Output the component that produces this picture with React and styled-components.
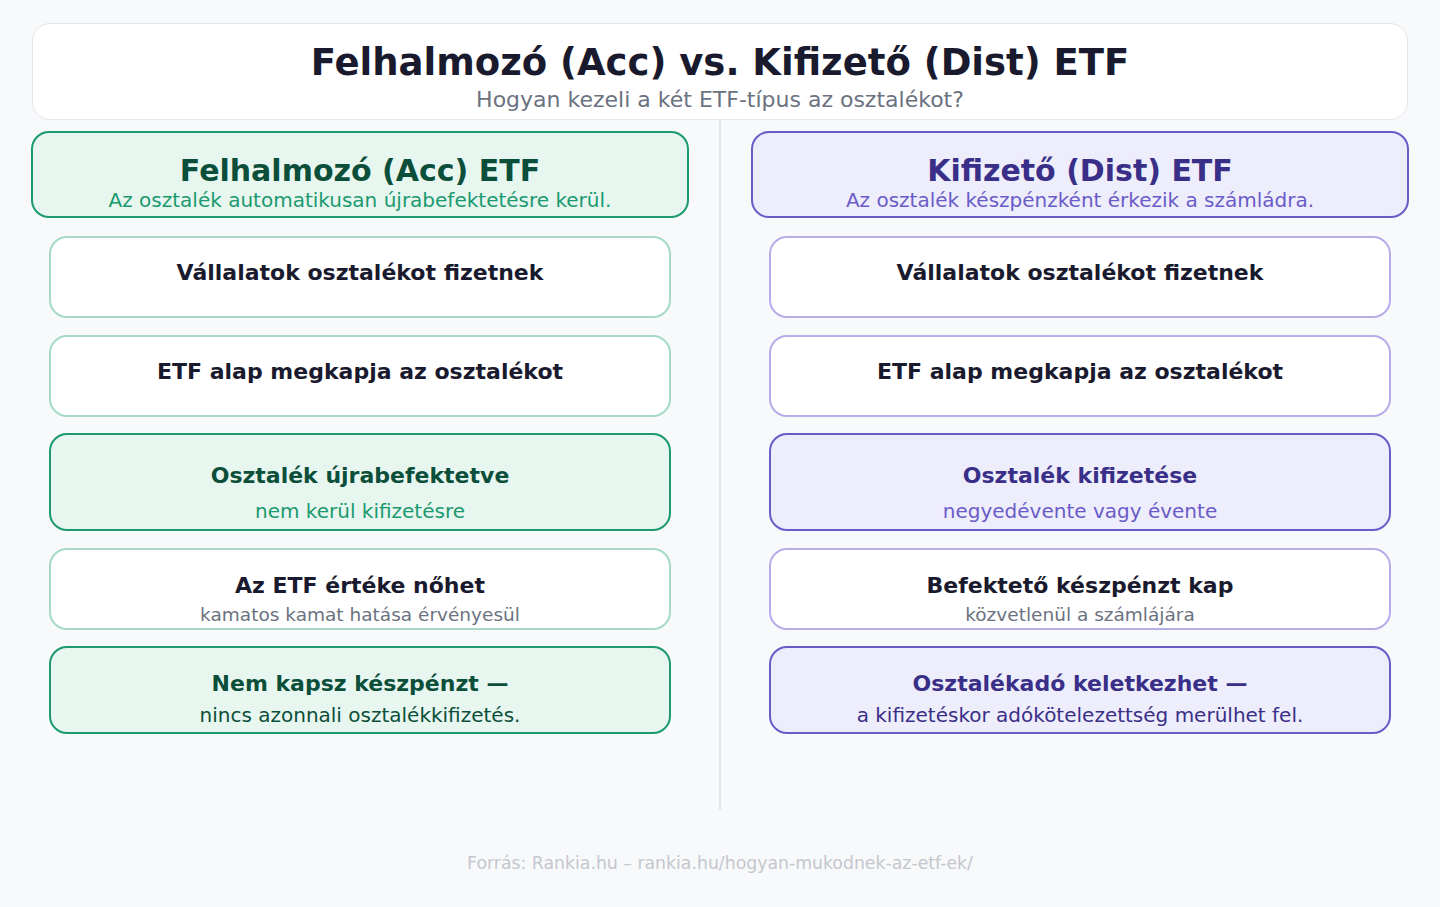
import React from 'react';
import styled, { createGlobalStyle, css } from 'styled-components';

const GlobalStyle = createGlobalStyle`
  html, body {
    margin: 0;
    padding: 0;
    background: #f8f9fb;
  }
  body {
    font-family: 'DejaVu Sans', 'Liberation Sans', sans-serif;
  }
`;

const palette = {
  acc: {
    strong: '#1a9a6e',
    soft: '#a6dac6',
    bg: '#e8f6f0',
    ink: '#0b4f3a',
    accent: '#1a9a6e'
  },
  dist: {
    strong: '#6a5cc8',
    soft: '#b6aee8',
    bg: '#eeedfb',
    ink: '#3a2f88',
    accent: '#6a5cc8'
  }
};

const Page = styled.div`
  width: 1440px;
  height: 907px;
  box-sizing: border-box;
  padding: 23px 31px 0 31px;
  display: flex;
  flex-direction: column;
  overflow: hidden;
`;

const Header = styled.header`
  margin: 0 1px;
  height: 97px;
  flex-shrink: 0;
  box-sizing: border-box;
  background: #ffffff;
  border: 1px solid #e4e6ea;
  border-radius: 18px;
  display: flex;
  flex-direction: column;
  align-items: center;
  padding-top: 17px;
`;

const Title = styled.h1`
  margin: 0;
  font-size: 37px;
  line-height: 44px;
  font-weight: bold;
  color: #1a1a2e;
`;

const Subtitle = styled.p`
  margin: 2px 0 0;
  font-size: 22px;
  line-height: 26px;
  color: #6b7280;
`;

const Columns = styled.div`
  display: grid;
  grid-template-columns: 658px 1fr 658px;
  height: 690px;
  flex-shrink: 0;
`;

const Divider = styled.div`
  justify-self: center;
  width: 2px;
  background: #e2e4e8;
`;

const Column = styled.section`
  display: flex;
  flex-direction: column;
  padding-top: 11px;
`;

const ColumnHead = styled.div`
  height: 87px;
  box-sizing: border-box;
  border: 2.5px solid ${p => palette[p.$tone].strong};
  background: ${p => palette[p.$tone].bg};
  border-radius: 18px;
  display: flex;
  flex-direction: column;
  align-items: center;
  padding-top: 20px;
`;

const ColumnTitle = styled.h2`
  margin: 0;
  font-size: 30px;
  line-height: 36px;
  font-weight: bold;
  color: ${p => palette[p.$tone].ink};
`;

const ColumnSub = styled.p`
  margin: -1px 0 0;
  font-size: 20px;
  line-height: 24px;
  color: ${p => palette[p.$tone].accent};
`;

const Steps = styled.div`
  display: flex;
  flex-direction: column;
  gap: 16.5px;
  padding: 18px 18px 0 18px;
`;

const stepShapes = {
  plain: css`
    height: 82px;
    padding-top: 22px;
  `,
  highlight: css`
    height: 98px;
    padding-top: 27.5px;
  `,
  detail: css`
    height: 82px;
    padding-top: 23px;
  `,
  note: css`
    height: 88px;
    padding-top: 23px;
  `
};

const subGap = {
  highlight: '10px',
  detail: '5px',
  note: '6px'
};

const isStrong = kind => kind === 'highlight' || kind === 'note';

const Step = styled.div`
  box-sizing: border-box;
  border-radius: 18px;
  display: flex;
  flex-direction: column;
  align-items: center;
  ${p => stepShapes[p.$kind]}
  ${p =>
    isStrong(p.$kind)
      ? css`
          border: 2.5px solid ${palette[p.$tone].strong};
          background: ${palette[p.$tone].bg};
        `
      : css`
          border: 2px solid ${palette[p.$tone].soft};
          background: #ffffff;
        `}
`;

const StepTitle = styled.div`
  font-size: 22px;
  line-height: 26px;
  font-weight: bold;
  color: ${p => (isStrong(p.$kind) ? palette[p.$tone].ink : '#1a1a2e')};
`;

const StepSub = styled.div`
  margin-top: ${p => subGap[p.$kind]};
  font-size: ${p => (p.$kind === 'detail' ? '18.5px' : '20px')};
  line-height: ${p => (p.$kind === 'detail' ? '22px' : '24px')};
  color: ${p =>
    p.$kind === 'highlight'
      ? palette[p.$tone].accent
      : p.$kind === 'note'
      ? palette[p.$tone].ink
      : '#6b7280'};
`;

const Footer = styled.footer`
  text-align: center;
  font-size: 17.3px;
  line-height: 20px;
  color: #c4c7cd;
  padding-top: 43px;
`;

const columns = [
  {
    tone: 'acc',
    title: 'Felhalmozó (Acc) ETF',
    sub: 'Az osztalék automatikusan újrabefektetésre kerül.',
    steps: [
      { kind: 'plain', title: 'Vállalatok osztalékot fizetnek' },
      { kind: 'plain', title: 'ETF alap megkapja az osztalékot' },
      { kind: 'highlight', title: 'Osztalék újrabefektetve', sub: 'nem kerül kifizetésre' },
      { kind: 'detail', title: 'Az ETF értéke nőhet', sub: 'kamatos kamat hatása érvényesül' },
      { kind: 'note', title: 'Nem kapsz készpénzt —', sub: 'nincs azonnali osztalékkifizetés.' }
    ]
  },
  {
    tone: 'dist',
    title: 'Kifizető (Dist) ETF',
    sub: 'Az osztalék készpénzként érkezik a számládra.',
    steps: [
      { kind: 'plain', title: 'Vállalatok osztalékot fizetnek' },
      { kind: 'plain', title: 'ETF alap megkapja az osztalékot' },
      { kind: 'highlight', title: 'Osztalék kifizetése', sub: 'negyedévente vagy évente' },
      { kind: 'detail', title: 'Befektető készpénzt kap', sub: 'közvetlenül a számlájára' },
      {
        kind: 'note',
        title: 'Osztalékadó keletkezhet —',
        sub: 'a kifizetéskor adókötelezettség merülhet fel.'
      }
    ]
  }
];

const EtfColumn = ({ data }) => (
  <Column>
    <ColumnHead $tone={data.tone}>
      <ColumnTitle $tone={data.tone}>{data.title}</ColumnTitle>
      <ColumnSub $tone={data.tone}>{data.sub}</ColumnSub>
    </ColumnHead>
    <Steps>
      {data.steps.map(step => (
        <Step key={step.title} $kind={step.kind} $tone={data.tone}>
          <StepTitle $kind={step.kind} $tone={data.tone}>
            {step.title}
          </StepTitle>
          {step.sub && (
            <StepSub $kind={step.kind} $tone={data.tone}>
              {step.sub}
            </StepSub>
          )}
        </Step>
      ))}
    </Steps>
  </Column>
);

const App = () => (
  <>
    <GlobalStyle />
    <Page>
      <Header>
        <Title>Felhalmozó (Acc) vs. Kifizető (Dist) ETF</Title>
        <Subtitle>Hogyan kezeli a két ETF-típus az osztalékot?</Subtitle>
      </Header>
      <Columns>
        <EtfColumn data={columns[0]} />
        <Divider />
        <EtfColumn data={columns[1]} />
      </Columns>
      <Footer>Forrás: Rankia.hu – rankia.hu/hogyan-mukodnek-az-etf-ek/</Footer>
    </Page>
  </>
);

export default App;
